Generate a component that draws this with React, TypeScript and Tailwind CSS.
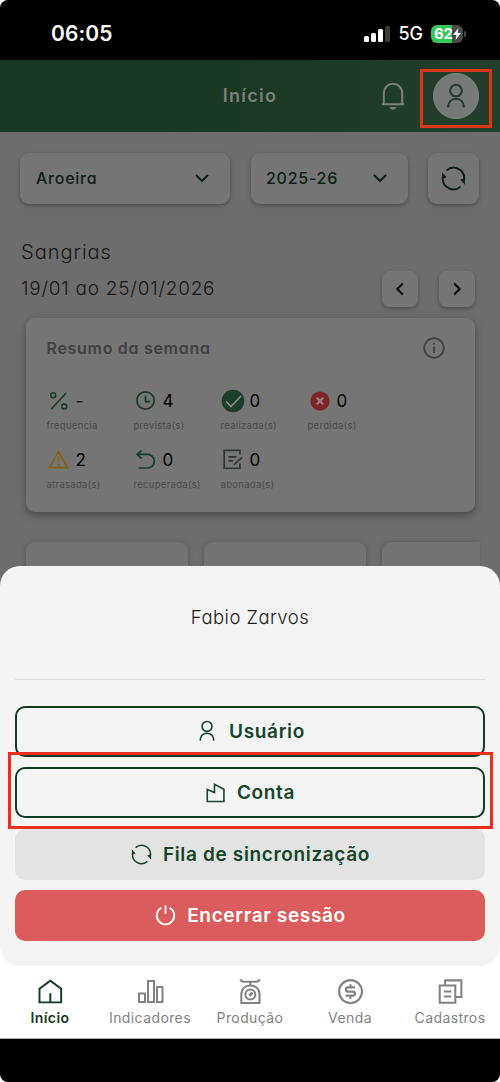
import type { ReactNode } from "react";

type IconProps = { className?: string; size?: number; strokeWidth?: number };

function Svg({
  children,
  className,
  size = 24,
  strokeWidth = 2,
}: IconProps & { children: ReactNode }) {
  return (
    <svg
      className={className}
      width={size}
      height={size}
      viewBox="0 0 24 24"
      fill="none"
      stroke="currentColor"
      strokeWidth={strokeWidth}
    >
      {children}
    </svg>
  );
}

function UserIcon(props: IconProps) {
  return (
    <Svg {...props}>
      <circle cx="12" cy="7" r="5.4" />
      <path d="M4.600 22.500c.3-5 3.300-8 7.400-8s7.100 3 7.400 8" />
    </Svg>
  );
}

function SyncIcon(props: IconProps) {
  return (
    <Svg {...props}>
      <path d="M5.300 4.200A10.200 10.200 0 0 1 22.200 13M18.700 19.800A10.200 10.200 0 0 1 1.800 11" />
      <path d="M1 12.500V6l4.300 4.800zM23 11.500V18l-4.600-4.800z" fill="currentColor" stroke="none" />
    </Svg>
  );
}

function BellIcon() {
  return (
    <svg width="24" height="30" viewBox="0 0 24 30" fill="none" stroke="currentColor" strokeWidth="2">
      <path d="M2.800 23V12a9.200 9.200 0 0 1 18.400 0V23M1 23.200h22" />
      <path d="M8.500 26h7c-.7 1.800-1.900 2.700-3.500 2.700S9.200 27.800 8.500 26z" fill="currentColor" stroke="none" />
    </svg>
  );
}

function FactoryIcon() {
  return (
    <Svg size={20} strokeWidth={1.9}>
      <path d="M1.500 22.200V7.800l8.700 3.600V1.600l11.300 6v14.600z" />
    </Svg>
  );
}

function PowerIcon() {
  return (
    <Svg size={21} strokeWidth={2}>
      <path d="M7.300 3.200a10 10 0 1 0 9.400 0M12 .5v9.500" />
    </Svg>
  );
}

function ChevronIcon({ d, size = 24 }: { d: string; size?: number }) {
  return (
    <Svg size={size} strokeWidth={2}>
      <path d={d} />
    </Svg>
  );
}

const stats = [
  {
    value: "-",
    label: "frequencia",
    icon: (
      <Svg size={20} className="text-[#173d28]" strokeWidth={1.9}>
        <circle cx="5" cy="5" r="3" />
        <circle cx="18.300" cy="18.500" r="3" />
        <path d="M20.500 2.500 2.800 21.500" />
      </Svg>
    ),
  },
  {
    value: "4",
    label: "prevista(s)",
    icon: (
      <Svg size={21} className="text-[#173d28]">
        <circle cx="12" cy="12" r="9.900" />
        <path d="M12 6.500v6.700h5" />
      </Svg>
    ),
  },
  {
    value: "0",
    label: "realizada(s)",
    icon: (
      <Svg size={24} className="text-[#8a8f8b]" strokeWidth={1.7}>
        <circle cx="12" cy="12" r="11.300" fill="#1d3f2a" stroke="none" />
        <path d="m5 12.500 5 5L20 7" />
      </Svg>
    ),
  },
  {
    value: "0",
    label: "perdida(s)",
    icon: (
      <Svg size={22} className="text-[#9a8585]" strokeWidth={2.2}>
        <circle cx="12" cy="12" r="10.500" fill="#7c2529" stroke="none" />
        <path d="m8.500 8.500 7 7m0-7-7 7" />
      </Svg>
    ),
  },
  {
    value: "2",
    label: "atrasada(s)",
    icon: (
      <Svg size={21} className="text-[#836015]" strokeWidth={1.9}>
        <path d="M12 3 1.700 21.300h20.600z" />
        <path d="M12 9.500v6M12 17v2" />
      </Svg>
    ),
  },
  {
    value: "0",
    label: "recuperada(s)",
    icon: (
      <Svg size={21} className="text-[#173d28]" strokeWidth={1.9}>
        <path d="M7.500 1.500 2.500 6.200l5 4.800M2.800 6.200h11.500a7.700 7.700 0 0 1 0 15.500H4" />
      </Svg>
    ),
  },
  {
    value: "0",
    label: "abonada(s)",
    icon: (
      <Svg size={21} className="text-[#303632]" strokeWidth={1.9}>
        <path d="M20.500 6V1.500h-18v20.500h18v-5.500" />
        <path d="M7.500 9h9M7.500 13.500h5M23 9.500l-9.500 8.500" />
      </Svg>
    ),
  },
];

const tabs = [
  {
    label: "Início",
    icon: (
      <Svg size={26} strokeWidth={1.8}>
        <path d="M2.300 22.500V10L12.300 2.500l10 7.500v12.500zM12.300 22.500v-8.500" />
      </Svg>
    ),
  },
  {
    label: "Indicadores",
    icon: (
      <svg width="28" height="26" viewBox="0 0 28 26" fill="none" stroke="currentColor" strokeWidth="2">
        <path d="M3 15.500h6V24H3zM12 3h6v21h-6zM21 9h5.500v15H21z" />
      </svg>
    ),
  },
  {
    label: "Produção",
    icon: (
      <Svg size={26} strokeWidth={1.9}>
        <path d="M3.300 1.200q.5 2.300 2.800 2.300h11.800q2.300 0 2.800-2.300M12.300 3.500v3.500M4 23V15.500C4 10 7.500 7 12.300 7s8.500 3 8.500 8.500V23z" />
        <circle cx="12.300" cy="15.300" r="4.600" />
        <path d="m11.300 16.300 3-3" strokeWidth="2.600" />
      </Svg>
    ),
  },
  {
    label: "Venda",
    icon: (
      <Svg size={26} strokeWidth={2}>
        <circle cx="12.500" cy="12.500" r="10.600" />
        <path d="M16.700 8.700h-6.600a1.900 1.900 0 0 0 0 3.800h4.600a1.900 1.900 0 0 1 0 3.800H7.900M12.400 5.700v3M12.400 16.300v3" />
      </Svg>
    ),
  },
  {
    label: "Cadastros",
    icon: (
      <Svg size={26} strokeWidth={1.9}>
        <path d="M2.500 7h14.400v15.800H2.500zM7.500 6.700V2.200h15v15.300h-5.300M6.200 12.500h7M6.200 17h7" />
      </Svg>
    ),
  },
];

const actionClass =
  "flex h-[51px] items-center justify-center rounded-[10px] pl-px text-[19px] font-semibold tracking-[0.65px]";

export default function App() {
  return (
    <div className="h-[1082px] w-[500px] bg-white font-['Inter',sans-serif]">
      <div className="relative flex h-full flex-col overflow-hidden rounded-[8px] bg-black">
        {/* Status bar */}
        <div className="flex h-[60px] shrink-0 items-center pt-[7px] pr-[34px] pl-[51px] text-white">
          <span className="text-[21px] font-semibold tracking-[0.1px]">06:05</span>
          <div className="ml-auto flex items-center">
            <div className="flex h-[16px] items-end gap-[2px]">
              <i className="h-[6px] w-[5px] rounded-[1.5px] bg-white" />
              <i className="h-[9px] w-[5px] rounded-[1.5px] bg-white" />
              <i className="h-[13px] w-[5px] rounded-[1.5px] bg-white" />
              <i className="h-[16px] w-[5px] rounded-[1.5px] bg-[#3b3b3b]" />
            </div>
            <span className="ml-[8px] text-[18px] font-medium">5G</span>
            <div className="ml-[8px] flex h-[18px] w-[32px] items-center rounded-[6px] bg-linear-to-r from-[#34c759] from-65% to-[#4a4a4a] to-65% pl-[3px]">
              <span className="pt-px text-[15px] leading-[18px] font-bold tracking-[-0.3px]">62</span>
              <svg width="8" height="12" viewBox="0 0 8 12" fill="white">
                <path d="M5.500 0 0 7h3.500L2.500 12 8 5H4.500z" />
              </svg>
            </div>
            <i className="ml-[1px] h-[6px] w-[2px] rounded-r-full bg-[#4a4a4a]" />
          </div>
        </div>

        {/* Header */}
        <header className="grid h-[72px] shrink-0 grid-cols-3 items-center bg-linear-to-r from-[#1a3723] from-45% to-[#24402c] px-[21px] text-[#7a817c]">
          <span />
          <h1 className="pb-px text-center text-[18px] font-semibold tracking-[1.3px]">Início</h1>
          <div className="flex items-center justify-end gap-[28px]">
            <BellIcon />
            <div className="flex size-[46px] items-center justify-center rounded-full border border-[#858786] bg-[#777978] text-[#2b3a30]">
              <UserIcon size={26} strokeWidth={2} />
            </div>
          </div>
        </header>

        {/* Dimmed page */}
        <main className="flex h-[460px] shrink-0 flex-col overflow-hidden bg-[#6d6d6d] pt-[21px] text-[#0c2115]">
          <div className="flex h-[51px] shrink-0 px-5 text-[16px] font-medium tracking-[0.75px] [font-feature-settings:'cv11']">
            <div className="flex w-[210px] items-center justify-between rounded-[9px] bg-[#757575] pr-[16px] pb-[2px] pl-[16px] shadow-[0_2px_4px_rgba(0,0,0,0.3)]">
              Aroeira
              <ChevronIcon d="m6 9 6 6 6-6" />
            </div>
            <div className="ml-[21px] flex w-[157px] items-center justify-between rounded-[9px] bg-[#757575] pr-[16px] pb-[2px] pl-[15px] shadow-[0_2px_4px_rgba(0,0,0,0.3)]">
              2025-26
              <ChevronIcon d="m6 9 6 6 6-6" />
            </div>
            <div className="ml-[20px] flex w-[51px] items-center justify-center rounded-[9px] bg-[#757575] shadow-[0_2px_4px_rgba(0,0,0,0.3)]">
              <SyncIcon size={25} strokeWidth={1.9} />
            </div>
          </div>

          <div className="mt-[34px] flex h-[80px] shrink-0 justify-between pr-[25px] pl-[21px] text-[#191919] [font-feature-settings:'cv11']">
            <div>
              <h2 className="text-[20px] leading-[28px] font-light tracking-[1px]">Sangrias</h2>
              <p className="mt-[9px] text-[19px] leading-[28px] font-light tracking-[0.75px]">
                19/01 ao 25/01/2026
              </p>
            </div>
            <div className="mt-[33px] flex gap-[21px]">
              <div className="flex size-[36px] items-center justify-center rounded-[8px] bg-[#757575] text-black shadow-[0_2px_4px_rgba(0,0,0,0.3)]">
                <ChevronIcon d="m15 6-6 6 6 6" size={22} />
              </div>
              <div className="flex size-[36px] items-center justify-center rounded-[8px] bg-[#757575] text-black shadow-[0_2px_4px_rgba(0,0,0,0.3)]">
                <ChevronIcon d="m9 6 6 6-6 6" size={22} />
              </div>
            </div>
          </div>

          <section className="mr-[25px] ml-[26px] h-[194px] shrink-0 rounded-[9px] bg-[#757575] pt-[17px] pr-[29px] pl-[20.5px] shadow-[0_3px_8px_rgba(0,0,0,0.35)]">
            <div className="flex h-[25px] items-center justify-between text-[#414141]">
              <h3 className="text-[16px] font-semibold tracking-[0.7px] [font-feature-settings:'cv11']">
                Resumo da semana
              </h3>
              <Svg size={24} strokeWidth={1.8}>
                <circle cx="12" cy="12" r="9.800" />
                <path d="M12 10.500v6.500M12 6.700v2" />
              </Svg>
            </div>
            <div className="mt-[28px] grid grid-cols-[repeat(4,87px)]">
              {stats.map((stat) => (
                <div key={stat.label} className="h-[59px]">
                  <div className="flex h-[25px] items-center">
                    <span className="flex w-[24px] justify-center">{stat.icon}</span>
                    <span className="ml-[5px] pt-[2px] text-[17px] text-black">{stat.value}</span>
                  </div>
                  <p className="mt-[5.5px] text-[9.5px] leading-[14px] tracking-[0.3px] text-[#4a4a4a]">
                    {stat.label}
                  </p>
                </div>
              ))}
            </div>
          </section>

          <div className="mt-[30px] mr-5 ml-[26px] flex h-[60px] shrink-0 gap-[16px]">
            <div className="w-[162px] rounded-[9px] bg-[#737373] shadow-[0_1px_5px_rgba(0,0,0,0.25)]" />
            <div className="w-[162px] rounded-[9px] bg-[#737373] shadow-[0_1px_5px_rgba(0,0,0,0.25)]" />
            <div className="flex-1 rounded-tl-[9px] bg-[#737373] shadow-[-1px_0_4px_rgba(0,0,0,0.2)]" />
          </div>
        </main>

        {/* Account sheet */}
        <section className="z-10 -mt-[26px] h-[400px] shrink-0 rounded-[20px] bg-[#f4f4f4] px-[15px]">
          <p className="h-[113px] pt-[37px] text-center text-[18.5px] leading-[28px] font-light tracking-[0.45px] text-[#222] [font-feature-settings:'cv11']">
            Fabio Zarvos
          </p>
          <div className="h-px bg-[#dce2e0]" />
          <div className="mt-[25.5px] flex flex-col gap-[10.5px] text-[#16452a]">
            <button className={`${actionClass} gap-[11px] border-2 border-[#123b22]`}>
              <UserIcon size={22} strokeWidth={1.7} />
              <span className="pt-[2px]">Usuário</span>
            </button>
            <button className={`${actionClass} gap-[11px] border-2 border-[#123b22]`}>
              <FactoryIcon />
              <span className="pt-[2px]">Conta</span>
            </button>
            <button className={`${actionClass} gap-[11px] bg-[#e3e3e3]`}>
              <SyncIcon size={21} strokeWidth={1.7} />
              <span className="pt-[2px]">Fila de sincronização</span>
            </button>
            <button className={`${actionClass} gap-[11px] bg-[#da5c5c] text-white`}>
              <PowerIcon />
              <span className="pt-[2px]">Encerrar sessão</span>
            </button>
          </div>
        </section>

        {/* Tab bar */}
        <nav className="-mt-[26px] grid h-[99px] shrink-0 grid-cols-5 border-b border-[#a5ada8] bg-white pt-[38px] text-[#828282]">
          {tabs.map((tab) => (
            <div
              key={tab.label}
              className="flex flex-col items-center text-[14px] tracking-[0.4px] first:font-semibold first:text-[#103b20]"
            >
              {tab.icon}
              <span className="mt-[4px] leading-[20px]">{tab.label}</span>
            </div>
          ))}
        </nav>

        {/* Highlights */}
        <div className="absolute top-[69px] left-[420px] z-20 h-[59px] w-[72px] border-[3px] border-[#d93614]" />
        <div className="absolute top-[752px] left-[8px] z-20 h-[77px] w-[485px] border-[3px] border-[#ed2e1a]" />
      </div>
    </div>
  );
}
